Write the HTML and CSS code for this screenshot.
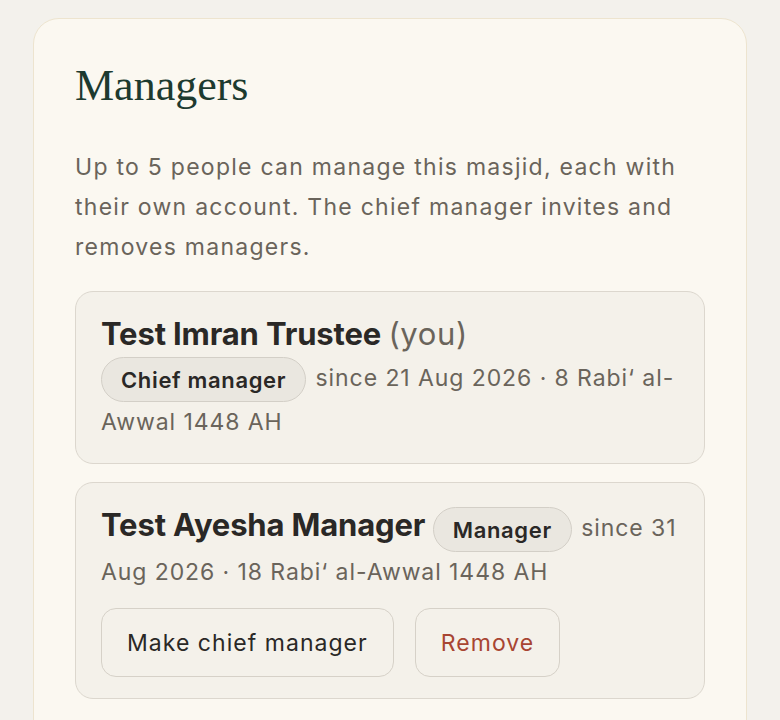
FILE: index.html
```html
<!DOCTYPE html>
<html lang="en">
<head>
<meta charset="utf-8">
<title>Managers</title>
<link rel="stylesheet" href="styles.css">
</head>
<body>
<section class="panel">
  <h2 class="panel-title">Managers</h2>
  <p class="panel-intro">Up to 5 people can manage this masjid, each with their own account. The chief manager invites and removes managers.</p>
  <ul class="member-list">
    <li class="member">
      <div class="member-info">
        <span class="member-name">Test Imran Trustee</span> <span class="member-you">(you)</span>
        <span class="badge">Chief manager</span> <span class="member-since">since 21 Aug 2026 · 8 Rabi‘ al-Awwal 1448 AH</span>
      </div>
    </li>
    <li class="member">
      <div class="member-info">
        <span class="member-name">Test Ayesha Manager</span>
        <span class="badge">Manager</span> <span class="member-since">since 31 Aug 2026 · 18 Rabi‘ al-Awwal 1448 AH</span>
      </div>
      <div class="member-actions">
        <button class="btn" type="button">Make chief manager</button>
        <button class="btn btn-danger" type="button">Remove</button>
      </div>
    </li>
  </ul>
</section>
</body>
</html>
```

FILE: styles.css
```css
html, body {
  margin: 0;
  padding: 0;
}
body {
  background: #f3f1ec;
  font-family: "Inter", "Noto Sans", sans-serif;
  color: #2b2926;
}
.panel {
  margin: 18px 33px 0 33px;
  background: #fbf8f1;
  border: 1.5px solid #ede4cf;
  border-radius: 26px;
  padding: 41px 41px 40px 41px;
  min-height: 760px;
  box-sizing: border-box;
}
.panel-title {
  margin: 0 0 35px 0;
  font-family: "Liberation Serif", "DejaVu Serif", serif;
  font-weight: 400;
  font-size: 44px;
  line-height: 52px;
  color: #1d3a2f;
}
.panel-intro {
  margin: 0 0 24px 0;
  font-size: 23px;
  letter-spacing: 0.055em;
  line-height: 40px;
  color: #6a645b;
}
.member-list {
  list-style: none;
  margin: 0;
  padding: 0;
  display: flex;
  flex-direction: column;
  gap: 18px;
}
.member {
  background: #f4f1ea;
  border: 1.5px solid #dcd7ce;
  border-radius: 18px;
  padding: 22px 25px 21px 25px;
}
.member-info {
  font-size: 23px;
  letter-spacing: 0.04em;
  line-height: 40px;
  color: #6a645b;
}
.member-name {
  font-size: 31px;
  font-weight: 700;
  letter-spacing: -0.005em;
  color: #2a2826;
}
.member-you {
  font-size: 31px;
  letter-spacing: 0.02em;
  color: #6a645b;
}
.badge {
  display: inline-block;
  vertical-align: middle;
  font-size: 22px;
  font-weight: 600;
  letter-spacing: 0.03em;
  line-height: 26px;
  color: #2a2826;
  background: #eae7e0;
  border: 1.5px solid #d3cfc7;
  border-radius: 999px;
  padding: 8.5px 19px;
  margin-right: 2px;
}
.member-actions {
  display: flex;
  gap: 21px;
  margin-top: 16px;
}
.btn {
  font-family: inherit;
  font-size: 23px;
  letter-spacing: 0.045em;
  line-height: 28px;
  color: #2a2826;
  background: transparent;
  border: 1.5px solid #d6d1c8;
  border-radius: 15px;
  padding: 19.5px 25px;
}
.btn-danger {
  color: #a84532;
}
```
